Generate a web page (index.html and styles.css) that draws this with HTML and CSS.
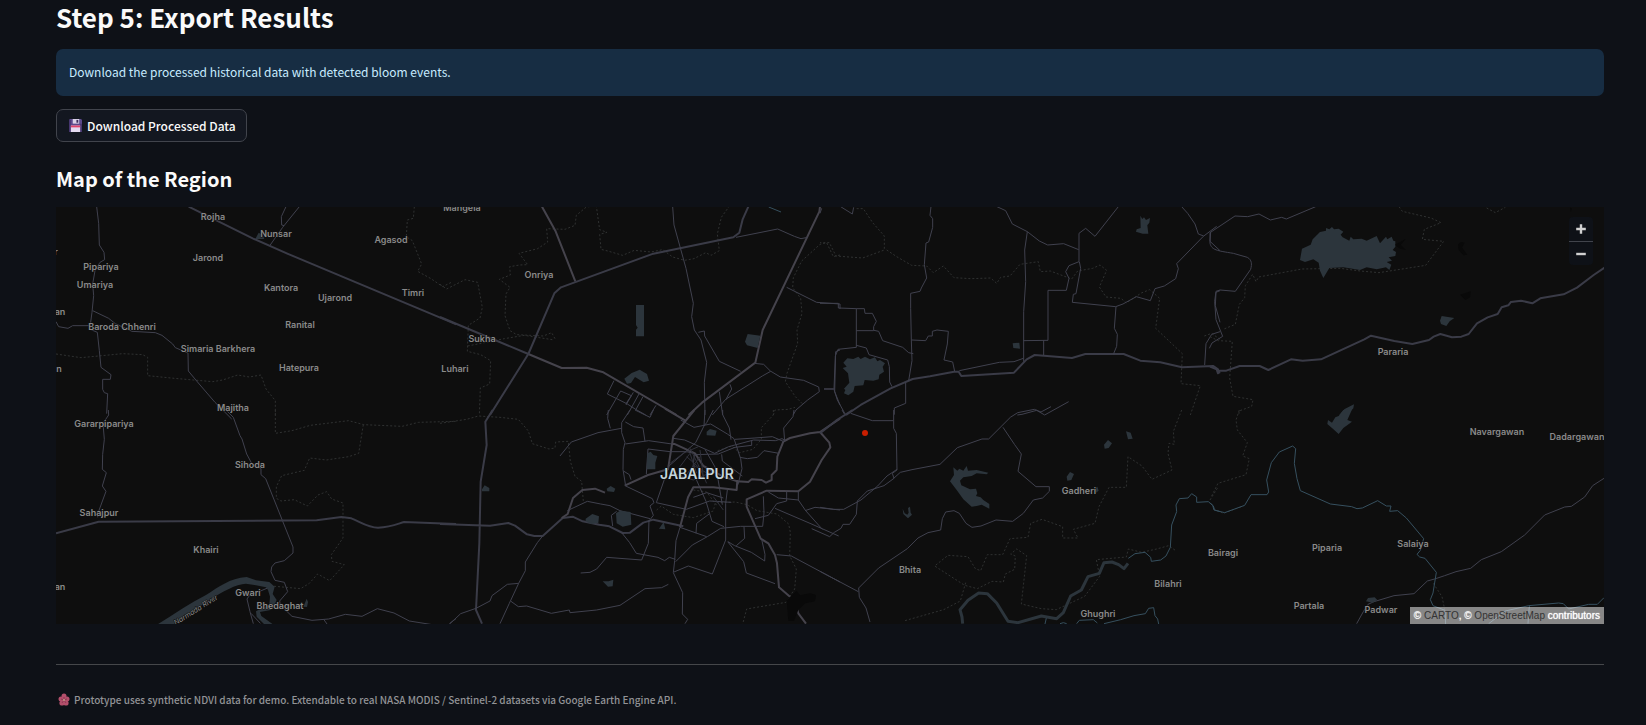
FILE: index.html
```html
<!DOCTYPE html>
<html lang="en">
<head>
<meta charset="utf-8">
<title>Export Results</title>
<link rel="stylesheet" href="styles.css">
</head>
<body>
<main class="page">
  <h2 class="title">Step 5: Export Results</h2>
  <div class="notice" role="status">Download the processed historical data with detected bloom events.</div>
  <button class="download" type="button">
    <svg class="download-icon" viewBox="0 0 14 14" aria-hidden="true">
      <path fill="#5b4a8c" d="M1 0h12l1 1v13H0V1z"/>
      <path fill="#46366f" d="M0 1h2v13H0zM12 5h2v9h-2z"/>
      <path fill="#d9d2e6" d="M4 0h7v5H4z"/>
      <path fill="#3b2e5c" d="M8 1h2v3H8z"/>
      <path fill="#e4daf0" d="M2 7h10v7H2z"/>
      <path fill="#e0456c" d="M2 7h10v2H2z"/>
    </svg>
    <span>Download Processed Data</span>
  </button>
  <h3 class="subtitle">Map of the Region</h3>
  <section class="map" aria-label="Map of Jabalpur">
    <svg class="map-canvas" viewBox="0 0 1548 417" preserveAspectRatio="xMidYMid slice">
      <g transform="translate(0 -7) scale(.33333)">
        <path class="dash" d="M0 462l75 11 125-12 60 3 15 8v55l80 8 115 10 30-5 45-15 35 6 35-6 15 42 28 35v43M1075 20l-3 35-18 5-3 50 18 12 20 50 8 20-12 22 40 22 35 24 30-15"/>
        <path class="road" d="M122 20l6 50 2 65 14 22 2 22-14 8-15 25-7 40 3 35-5 50-6 45M0 365l8 15 28 5 14-8h50M100 387l24 10 6 55 5 50 30 22-2 14h-23v30l5 10 10 3-3 60M110 332l48 23 20 16 50 23 70 4 20 8 32 26 8 11 38 16 1 54 30 36 50 58 50 50M690 20l-14 30 1 25 7 2M730 20l-50 62-38 54"/>
        <path class="trunk" d="M398 20l192 95 104 46 507 212"/>
        <path class="water" d="M598 117l10-19 12 7 5 12z"/>
      </g>
      <g transform="translate(0 203) scale(.33333)">
        <path class="dash" d="M658 0v70l50-8 55-16 115-14 45 12 115 5 50-12 112-3M922 44l-14 86-30 10-67 10-50-6-16 37-68 16-16 33v35l14 8 40-4 39 19 32-33 26-10 15 22 34 12v105l-35 50 2 20 37 10-44 48-36-20-25 28-26 16-88-8"/>
        <path class="road" d="M157 0l1 15-17 25 4 48-5 45-1 45 12 10-12 40 11 16-14 38-11 30v10M510 0l22 22 20 55 6 10 14 45 15 28 28 16v18l14 12 82 205v18l-26 23-28 7-10 12-2 14 12 26 28 6 10 28-24 28 2 12 35 34 60 12 50-4 50-14 50 6 46-23 50 13 46 24 75 12M635 534l-55 23-7 10 9 38 10 36M585 610l28 30M803 628l10 14M1180 641l20-15"/>
        <path class="trunk" d="M0 370l128-35 654-4 74-10 30 4c30 12 50 28 80 28 40-2 60-12 78-17l156 6"/>
        <path class="water" d="M300 646C350 615 400 580 450 555C490 530 520 505 572 501L600 511L640 516L656 530L650 552L662 570L655 586L644 600L612 606L616 618L655 646L628 646L602 620L600 604L618 594L640 584L642 560L636 540L630 532L600 526L570 521C540 522 500 545 460 570C420 598 380 622 350 646z"/>
        <path class="water" d="M742 590l10-24 4 10-3 15z"/>
      </g>
      <g transform="translate(384 -7) scale(.33333)">
        <path class="dash" d="M0 253l20 14 55-28 38 8 14 75-7 32-35 22-3 78 40 10 30 18-3 70-28 12-3 82M83 438l110-22 60-10 90 14M345 416l-10-18-25 10-80-4-20-12-15-45 3-65 12-20-32-24 33-13-2-25 30-5 24-1-26-34 56-14 30-20-3-40 55 2 30-12 4-30 30-25 30-4 4 30 6 42 22 8-22 6 4 45 20 5 45 13 35-15 50 5 35-7 30 22 36 10 28-5 35-18 16 8 25-14-6-50 12-50 25-35M1200 165l-20 5-20-42-20 5-55 50-25 50-2 30 24 32 4 45-15 50 2 40-32 90-5 25 30 45 25 25M1000 645l5-15 40-2 20-6"/>
        <path class="primary" d="M306 20l40 72 60 152M1140 20l-2 15-170 355-22 98-160 120-40 37M265 462l100 42 75-1 50 14 220 128"/>
        <path class="trunk" d="M0 351l265 111-115 183M265 462l78-182 20-18L640 161l240-49 18-14 10-40 17-38"/>
        <path class="road" d="M698 20l4 55 36 130 22 105-5 40 8 40 20 30 17 67-7 60 2 98M775 397l18-4 1 15 44 76 64 30M888 112l125-25 50 22 20 7 20-4M1040 262l90 45 70 5v15M1200 450l-13 5-3 120 16 40M943 490l28 3 20 20 30 18 70 10 45 20 2 14-35 25-35 30-8 14M992 514l-25 14-110 70-40 47M838 575l10 70M870 553l5 14-18 33M1152 567h32M522 542l-20 40 60 30 25 16 30 17M500 645l42-72 32 14-16 24M580 577l-22 38M598 580l-36 65M609 590l-22 40M648 616l-18 29"/>
        <path class="stream" d="M986 21l37 15"/>
        <path class="water" d="M588 315h24v94h-24v-20l5-6-5-8zM553 536l22-17 24-10 22 13 6 20-16 5-26-16-12 18-12 2zM915 425l8-23 38 5-8 37-32-8z"/>
      </g>
      <g transform="translate(384 203) scale(.33333)">
        <path class="dash" d="M0 40l80-12 35-10 65 4 55 6 30 35 12 38 50 16 18-3 2-18 38-2 6 60 14 45 20 15 5 60M650 300l14-12 14 10 22 15 60 10 60-20 6-25 60-2 35 8 30 18 60 10 35 30 5 25-2 70 20 40-5 60-26 40-118 20-12 45M1000 0v15l-36 38v35l-25 30-40 10-24-20-45 15M760 240l40 6 30 40"/>
        <path class="trunk" d="M158 0l-22 35 4 70-18 110-4 185-10 200 18 41M0 342l150 5 55-8 20 8 36 26 22 5h25l60-54 30-4 30 14 50 10 30 5 40 20 22-1 40-30 30-9 90 20"/>
        <path class="primary" d="M675 -4l60 35M763 0L700 78L684 178L624 195L554 227M495 248l-30-12-38 4-28 24-16 48-18 12M695 98L765 130L790 168L850 200L892 214L925 216L935 208L965 210L978 218L995 210V195L1010 180L1012 140L1030 95L1050 84L1110 70L1140 66L1168 98L1171 112L1145 150L1110 215L1075 244L980 242L920 268V290L962 386L985 400L1005 435L1011 460L1017 532L1050 560L1065 575L1075 610L1098 641M1140 66L1200 26M720 352l24-90 16-30 60 0 70 8 2-30"/>
        <path class="road" d="M505 0l-2 25 8 30M360 138l34-42 80-28 70-13M570 0l-25 38v30l10 30-5 20-1 60 8 50 80 38 5 12-12 10 10 28-15 20M556 36l25 14 28 4 6 40M556 102l70-10 70 10M585 0l45 22 10-22M700 85l34 5 90 40 42-20 75-20 65 2 20-6 10 5M722 30l40 22 50-10 50 30 20 14 20 60 4 30-12 48M820 0l-20 38-8 10-25 50-80 70-38 110 90 20 70-25 65 4M795 0l-3 48M848 0v14l20 40 5 35M885 88l60-4 52-4 35 15M760 130l-20-5-50 0-66-8-5 75M900 142l22 4 30-4 20-20 45 8M935 90v16l-50 6-50 20-72 2-5 50 40 90 18 60 36 16M845 133l2 20 60 45M795 118l34 60 18 106M760 262l40-14 50 16M810 310l-40 30-2 30M382 302l60-28 40 8 28 5 30 15 90 24M530 304l-16 12 4 32M627 330l-2 70-20 50-105-8-30 35-20 10-28 2M545 368l24 30 20 32 65 12 20 10 14-10 18 6M720 352l-12 40-4 60-4 36 28 60-1 64 16 16-8 13M707 455l50-50 45-25 40-25 60-6h66l4-40-2-50M720 352l80 28M862 240l-5 40v110l-40 102-72-24-43 18M863 395l48 60 8 34 86 32M864 395l20 12 50 20 40 26 1-20-10-45M912 350l2 35-25 22M945 326l40-10 25-35 30-8v-28M985 246l30 18 60 6v-26M1075 270l22 32 50 56M1095 302l30-10 75 8M1005 295l105 45 86 38M1010 434l44 4 146 78M1034 94l-3-40 28-34 3-20M552 184l16 10 5 15M213 574l22 16 25-2 74 22 54-10 2 8 80-8 70-14 30-20 45-30 50-3 20-10M308 378l-16 20-36 58v26l-20 38-28 60-28 61M236 520l-34 3-46 34-6 16-42 22-46 16-32 30"/>
        <path class="street" d="M690 160l40-30 45-20M720 170l30-40 20 60M735 200l45-60M750 115l30 60 20 45M780 120l10 80M700 190l60 20 70-30M760 165l50 30M740 140l40 35M820 260l30 40"/>
        <path class="water" d="M622 130l10-5 8 10 12 3-6 20v20h-26zM800 65l10-8 20 5-4 15-26-1zM126 238l8-12 14 8v10h-22zM500 236l12-8 14 8-4 10-20-2zM437 326l20-14 20 7-2 20-22 3-16-8zM528 310l12-8 32 4 2 38-26 6-18-10zM657 356l14-20 5 22zM488 514h18l14-5-2 20-14 1z"/>
        <path class="shade" d="M1040 570L1070 542L1080 556L1110 550L1128 555L1125 574L1095 580L1075 600L1062 632L1045 632z"/>
      </g>
      <g transform="translate(764 -7) scale(.33333)">
        <path class="dash" d="M110 26h20l28 42 35 40v42l-65 24-80-6-20-40h-28M200 150l30 20 45 26 45 2 20 20 30-20 32 35 50 3 60-2 18 16 12-18 28-4 30-35 55-8 6 30 30-2 64 24 18-24 45-8 22-10 20 16-22 50 20 30 45 4 16 14 45-30 25-10 30 26-12 90 80 76-4 90 58 6-30 88M1153 408l22-8 25 18"/>
        <path class="trunk" d="M78 645l44-30 90-50 66-28 52-8 72-14h14l8 13 158-10 38-40 24-13 112 9 40-12h115l50 20 60 5 65 15 94-4 14 10 5 12"/>
        <path class="road" d="M62 20l35 22 4-20M5 25l-5 15M333 20l-3 26 8 10v26l-12 44-8 3-5 65 7 40-16 30-4 10-28 6v45l2 95 2 62-10 60M275 420l42 2 8-14 12 0v-14l14-4 34 4-3 38-10 48 26 6 6 28M418 512l120-25 44-2 28-10M531 20l26 12 20 40 45 23 36 28 25 12 48-4 45 18M622 95l-8 55 3 95-6 90v150M777 100v85l-30 12-10 18 10 20-8 36h-55v150l-74 1M671 420v46M777 100l20-15 28 24 70-89M778 185l4 20-14 76-8 2-3 24 130 13 22-8 40-22 42 12 14-36 28-8 34-22 8-30-5-15 80-82 40-30M1085 20l18 20 22 32 10 30 16 6M1172 96l-2 28 30 28M888 320l-5 65 9 18-2 36-10 24M1200 272l-12 5-2 40 14 50M1200 395l-25 8-17 28-4 64M0 310h55v14l54 2v116l-55 6-8 20-4 100 10 32 25 45M109 326h24l2 14h22l12 24-8 16v12H109M162 391l14 3 12 28 60 20 18 16 14 3M109 436l30 8 8 20 56 16 5 20 1 46 7 14M12 567h28M257 548v62l-34 14v20M592 645l14-2 44-12 24 14 72-40"/>
        <path class="water" d="M68 504L80 500L70 488L82 475L100 477L115 470L122 477L135 470L150 478L165 472L172 484L180 480L195 490L188 500L192 515L178 524L176 538L160 542L134 540L130 556L104 558L100 575L85 586L72 580L76 570L72 566L88 548L84 520zM578 430l20-2 2 18-20-2zM961 47L967 57L972 52L978 60L990 54L988 68L982 76L985 101H968L948 95L950 88L962 84z"/>
      </g>
      <g transform="translate(764 203) scale(.33333)">
        <path class="dash" d="M1085 0l-25 65 3 38-16-3-3 30 12 50-60 28-30-40-42-28-5 92-52 0-30 58-12 50-65 18 14 26h-46v-34l-62-22-34 12-8 42-54 4-22 48-46 0-20 48-16-6-22-36-60-4-40 32 90 58 38 10 44-22 34 2 6-24 28-14 2-40-14-6 18-15 30 20-16 145 60 14 45 3 85-40 45-60-10-50 90-8 6-24 40 10 45-10 36-10 20 14M437 518l-16 55-50 26-120 34M1170 270l25-40"/>
        <path class="trunk" d="M0 70l48-38 50-32"/>
        <path class="road" d="M66 0l7 12M92 10l65 22h63M221 0v55l8 15 2 110-14 10 5 15-30 22-50 16-30 30-3 40-20 30-20 0-6 12-20 12-14 13-54-24M231 178l-30 20-28 30-50 42-52 28-30 0-41-6M221 205l20-18 35-8 84-16 52-50 74-26h20l65-65 22-14 50-10 20 8 30-16M549 52l35 52 20 28-10 52 54 46 40 0v14l-20 20-28 6-30 40-32 24-50-4-45 18-27 4-18-12-20-30-16-8-25 4-10 20-5 34-38 8-30 16-32 32-86 58-60 60 2 28 20 32 12 42M115 545L0 484"/>
        <path class="stream" d="M925 445L945 431L975 427L992 442L994 454L1022 450L1038 438L1051 412L1055 345L1070 305L1068 285L1078 266L1104 264L1115 251L1130 261V277L1165 275L1180 288L1184 300L1200 305M680 620l-5 22M720 641l10-3 10 3M770 641l8-10 42-2 12 10M852 641l50-12 40-12 34-6 10-16 15-2 4 24 8 10 3 15"/>
        <path class="river" d="M428 641l-2-20-6-22 24-28 32-22 26 2 28 28 34 55 30 4 70-20 46 8 20-18 22-50 32-18 20-40 34-10 14-32 24-2 20 8 16 12 12-16"/>
        <path class="water" d="M400 172L412 182L418 176L430 182L440 168L444 182L470 180L505 188L500 193L470 190L455 198L430 202L420 212L424 226L450 238L468 236L472 250L468 258L482 262L490 270L508 282V296L485 284L470 288L455 290L430 268L410 240L390 214L402 195zM248 296L254 310L262 314L266 308L264 294L270 290L272 308L276 314L264 325L250 312zM852 104l12-14 12 10-10 14-12 2zM918 64l14 4 6 18-14 2zM740 200l10-14 12 6-8 18-12 2zM822 236l10-6 4 12-8 6z"/>
      </g>
      <g transform="translate(1154 -7) scale(.33333)">
        <path class="dash" d="M567 20l10 14 86 20 30 14-50 20-6 30 64 6-54 72-140 22-56-5-60-8-115 2-130 24-8 14-10-22-22 34-2 36-16 20-12 60-34 14M0 410l25 12 42 2-8 110 10 55 60 10-4 20-38 14v14M830 24l26 14 30-16"/>
        <path class="road" d="M0 98l75-50 38 2 34-8 34 18 34-8 14 5 88-37M0 98v32c5 20 20 22 70 30l42 12c14 8 14 20 10 36l-46 66-46-4-12 4-4 30 4 55 20 50-32 20-8 16"/>
        <path class="trunk" d="M0 500l20 8 4 12 5-8 20 0 40-14 60 0 26 12 68-32 35 4 55-4 130-60 20-11 70 16 54 9 50-12 14-10 20-8 35 10 28-2 22-8 25-32 32-18 30-10 12-20 20-6 8-10 30-4 34 8 24-15 70-12 40-20 50-38 40-27"/>
        <path class="water" d="M270 180L276 146L302 134L308 118L330 96L348 92V84L358 88L366 81L372 88L386 86L400 95L392 104L398 112L418 122L422 110L430 118L455 116L470 122L500 108L510 130L528 110L532 118L545 110L550 122L556 124V140L548 150L558 156L556 168L536 172L546 182L530 186L544 194L538 210L528 202L500 208L470 202L450 210L400 202L358 204L340 234L330 212L326 188L310 178L285 186zM690 362l5-14 38 6-14 10-10 14-16-6zM388 645l16-18 28-14-2 12-20 20z"/>
        <path class="shade" d="M555 134L588 116L572 134L588 150L570 146zM752 126L764 128L756 142L764 154L772 164L760 166L746 150L744 134zM750 284l14-4 18-6-2 18-14 8zM1080 22l6 4-4 10z"/>
      </g>
      <g transform="translate(1154 203) scale(.33333)">
        <path class="dash" d="M88 0l-10 30 4 30 30 38-14 40 20 8-10 48-84 26-20 40M10 296l30 14 60-22M670 520l26 40 8 38"/>
        <path class="road" d="M1182 205l-34 22-24 34-40 28-20 2-60 24-60 60-70 50-60 24-32 26-44 10-34 12-30 10-22 6-40 38-60 6-60 18-18 8-14 22-20 36"/>
        <path class="stream" d="M0 278l8 8 4 14 32 8 60-22 19-32h48l5-8-6-36 14-52 24-32 40-18 9 8-4 44 8 46 10 36 90 40 64 8 16 6 16-2 46-22 26 16 14 0-4 16 24-2 26 22 52 62-10 35-10 12 8 8 16 4 34 42-10 62-8 20 8 18 36 14 2 44M836 641l50-38 70-16 90-8 14 2 16 16 60-14 26 0 20-20M958 588l-4 53"/>
        <path class="water" d="M428 -6L412 30L426 35L400 54L386 72L366 54L352 42L354 30L366 38L376 22L386 18L400 0zM468 574l6-10 20-2 8 8-14 8z"/>
      </g>
      <g class="labels">
        <text x="157" y="13">Rojha</text><text x="220" y="30">Nunsar</text><text x="335" y="36">Agasod</text><text x="152" y="54">Jarond</text>
        <text x="45" y="63">Pipariya</text><text x="39" y="81">Umariya</text><text x="225" y="84">Kantora</text><text x="279" y="94">Ujarond</text>
        <text x="357" y="89">Timri</text><text x="4" y="108">an</text><text x="66" y="123">Baroda Chhenri</text><text x="244" y="121">Ranital</text>
        <text x="162" y="145">Simaria Barkhera</text><text x="243" y="164">Hatepura</text><text x="399" y="165">Luhari</text><text x="426" y="135">Sukha</text>
        <text x="406" y="4">Mangela</text><text x="483" y="71">Onriya</text><text x="177" y="204">Majitha</text><text x="48" y="220">Gararpipariya</text>
        <text x="194" y="261">Sihoda</text><text x="43" y="309">Sahajpur</text><text x="150" y="346">Khairi</text><text x="192" y="389">Gwari</text>
        <text x="224" y="402">Bhedaghat</text><text x="4" y="383">an</text><text x="3" y="165">n</text><text x="0" y="48">r</text>
        <text x="1337" y="148">Pararia</text><text x="1441" y="228">Navargawan</text><text x="1521" y="233">Dadargawan</text><text x="1023" y="287">Gadheri</text>
        <text x="854" y="366">Bhita</text><text x="1112" y="380">Bilahri</text><text x="1042" y="410">Ghughri</text><text x="1167" y="349">Bairagi</text>
        <text x="1271" y="344">Piparia</text><text x="1357" y="340">Salaiya</text><text x="1253" y="402">Partala</text><text x="1325" y="406">Padwar</text>
        <text class="river-label" transform="translate(141 405) rotate(-32)">Narmada River</text>
        <text class="city" x="641" y="272">JABALPUR</text>
      </g>
      <circle class="marker" cx="809" cy="226" r="3"/>
    </svg>
    <div class="zoom">
      <button class="zoom-button" type="button" aria-label="Zoom in"><svg viewBox="0 0 10 10"><path d="M5 1v8M1 5h8"/></svg></button>
      <button class="zoom-button" type="button" aria-label="Zoom out"><svg viewBox="0 0 10 10"><path d="M1 5h8"/></svg></button>
    </div>
    <div class="attribution">© <a href="#carto">CARTO</a>, © <a href="#osm">OpenStreetMap</a> contributors</div>
  </section>
  <hr class="divider">
  <footer class="caption">
    <svg class="flower" viewBox="0 0 12 14" aria-hidden="true">
      <g fill="#b34f6b"><circle cx="6" cy="3" r="2.5"/><circle cx="3" cy="6" r="2.5"/><circle cx="9" cy="6" r="2.5"/><circle cx="4" cy="10" r="2.6"/><circle cx="8" cy="10" r="2.6"/><circle cx="6" cy="7" r="3"/></g>
      <path stroke="#7c2f49" d="M6 7V4M6 7l-3-1M6 7l3-1M6 7l-2 3M6 7l2 3" stroke-width=".7"/><circle cx="6" cy="7" r="1" fill="#c9a08c"/>
    </svg>
    <span>Prototype uses synthetic NDVI data for demo. Extendable to real NASA MODIS / Sentinel-2 datasets via Google Earth Engine API.</span>
  </footer>
</main>
</body>
</html>
```
FILE: styles.css
```css
* { box-sizing: border-box; }
body {
  margin: 0;
  background: #0e1117;
  color: #fafafa;
  font-family: "Noto Sans CJK SC", "Noto Sans", sans-serif;
  font-size: 12px;
}
.page { padding: 0 42px 0 56px; }
.title, .subtitle { margin: 0; font-weight: 700; }
.title { font-size: 26px; line-height: 34px; }
.notice {
  margin-top: 15px;
  padding: 13px 13px 14px;
  border-radius: 7px;
  background: #172d43;
  color: #c7ebff;
  line-height: 20px;
}
.download {
  display: flex;
  align-items: center;
  gap: 5px;
  height: 33px;
  margin-top: 13px;
  padding: 0 10px 0 12px;
  border: 1px solid #41444c;
  border-radius: 7px;
  background: #131720;
  color: #fafafa;
  font: inherit;
  font-weight: 500;
}
.download-icon { width: 13px; height: 13px; }
.subtitle { margin-top: 22px; font-size: 20px; line-height: 30px; }
.map {
  position: relative;
  height: 417px;
  margin-top: 13px;
  overflow: hidden;
  background: #0e0e0e;
}
.map-canvas { display: block; width: 100%; height: 100%; }
.map-canvas path { vector-effect: non-scaling-stroke; fill: none; stroke-linejoin: round; }
.map-canvas .road { stroke: #40414e; stroke-width: 1px; }
.map-canvas .street { stroke: #30313b; stroke-width: 1px; }
.map-canvas .primary { stroke: #45434c; stroke-width: 2px; }
.map-canvas .trunk { stroke: #3a3b47; stroke-width: 2px; }
.map-canvas .dash { stroke: #2f3131; stroke-width: 1px; stroke-dasharray: 2 2; }
.map-canvas .stream { stroke: #36505f; stroke-width: 1px; }
.map-canvas .river { stroke: #2c353c; stroke-width: 3px; }
.map-canvas .water { fill: #2c353c; }
.map-canvas .shade { fill: #090909; }
.marker { fill: #c81e00; }
.labels {
  fill: #8a8a8a;
  stroke: #0e0e0e;
  stroke-width: 1px;
  paint-order: stroke;
  font-family: Inter, sans-serif;
  font-size: 9px;
  font-weight: 600;
  text-anchor: middle;
}
.labels .city { fill: #c5d5dc; font-size: 14px; }
.labels .river-label { font-size: 7px; font-weight: 400; font-style: italic; }
.zoom {
  position: absolute;
  top: 10px;
  right: 11px;
  display: flex;
  flex-direction: column;
  width: 24px;
  border-radius: 4px;
  background: #0e1117;
}
.zoom-button {
  display: grid;
  place-items: center;
  height: 24px;
  padding: 0;
  border: 0;
  background: none;
}
.zoom-button + .zoom-button { border-top: 1px solid #41444c; }
.zoom-button svg { width: 12px; height: 12px; }
.zoom-button path { fill: none; stroke: #d0d0d0; stroke-width: 2; }
.attribution {
  position: absolute;
  right: 0;
  bottom: 0;
  padding: 0 4px;
  background: rgba(255, 255, 255, 0.5);
  color: #ffffff;
  font: 400 10px/17px "Liberation Sans", Arial, sans-serif;
  text-shadow: 0 0 1px #ffffff;
}
.attribution a { color: #333333; text-decoration: none; text-shadow: none; }
.divider { height: 1px; margin: 40px 0 0; border: 0; background: #45474a; }
.caption {
  display: flex;
  align-items: center;
  gap: 4px;
  margin-top: 25px;
  padding-left: 2px;
  color: #929396;
  font-size: 10px;
  font-weight: 500;
  line-height: 20px;
}
.flower { width: 12px; height: 14px; }
```
